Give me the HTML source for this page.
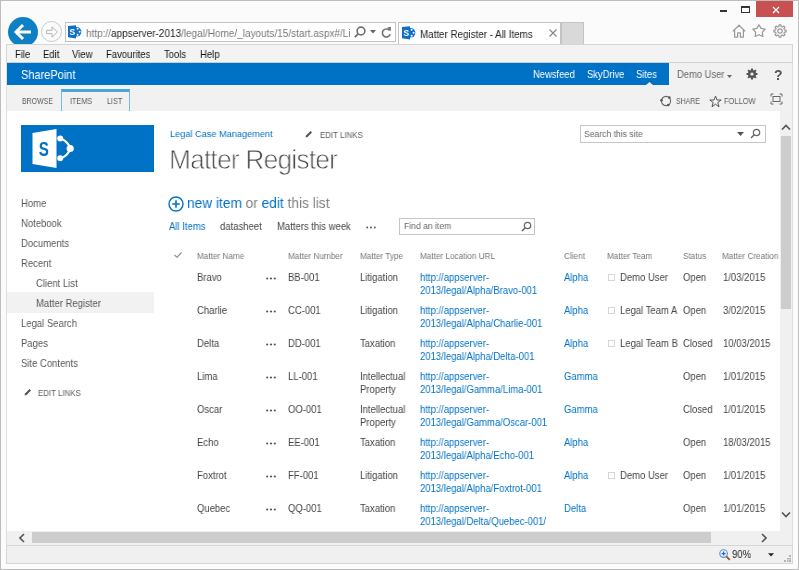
<!DOCTYPE html>
<html><head><meta charset="utf-8">
<style>
*{margin:0;padding:0;box-sizing:border-box}
html,body{width:799px;height:570px;overflow:hidden;background:#fbfbfb;font-family:"Liberation Sans",sans-serif;color:#444}
.a{position:absolute;white-space:nowrap;line-height:1;will-change:transform}
#frame{position:absolute;left:0;top:0;width:799px;height:570px;border:1px solid #bdbdbd;}
#menubar{position:absolute;left:6px;top:44px;width:787px;height:19px;background:#f3f3f3;border-top:1px solid #d6d6d6;border-left:1px solid #d6d6d6;border-right:1px solid #d6d6d6;border-bottom:1px solid #cfcfcf}
#suite{position:absolute;left:7px;top:63px;width:662px;height:22px;background:#0072c6}
#suiteR{position:absolute;left:669px;top:63px;width:123px;height:22px;background:#f1f1f1}
#ribbon{position:absolute;left:7px;top:85px;width:785px;height:26px;background:#f1f1f1}
#content{position:absolute;left:7px;top:111px;width:773px;height:420px;background:#fff}
#leftline{position:absolute;left:6px;top:63px;width:1px;height:483px;background:#dedede}
#rightline{position:absolute;left:792px;top:63px;width:1px;height:483px;background:#dedede}
#vscroll{position:absolute;left:780px;top:111px;width:12px;height:420px;background:#f0f0f0}
#vthumb{position:absolute;left:781px;top:136px;width:10px;height:173px;background:#cdcdcd}
#hscroll{position:absolute;left:7px;top:531px;width:785px;height:14px;background:#f0f0f0}
#hthumb{position:absolute;left:32px;top:532px;width:679px;height:11px;background:#cdcdcd}
#status{position:absolute;left:6px;top:545px;width:787px;height:19px;background:#f0f0f0;border:1px solid #d6d6d6}
.nav{font-size:10.26px;margin-top:0.6px;color:#585858}
.hdr{font-size:8.86px;margin-top:-0.32px;color:#777}
.cell{font-size:10.26px;color:#444;line-height:12.6px}
.link{color:#0072c6}
.dots{font-size:10px;color:#444;letter-spacing:0.5px;font-weight:bold}
.cb{position:absolute;width:7px;height:7px;border:1px solid #d6d6d6;background:#fff}
.t{transform:scaleX(0.9259);transform-origin:0 0}
</style></head><body>
<div id="frame"></div>

<!-- window controls -->
<div class="a" style="left:720px;top:10px;width:7px;height:2px;background:#333"></div>
<div class="a" style="left:741px;top:6px;width:9px;height:7px;border:1px solid #333;border-top-width:2px"></div>
<div class="a" style="left:756px;top:1px;width:37px;height:16px;background:#c75050"></div>
<svg class="a" style="left:771.5px;top:6px" width="8" height="8" viewBox="0 0 8 8"><path d="M1 1L7 7M7 1L1 7" stroke="#fff" stroke-width="1.3"/></svg>

<!-- back / forward -->
<div class="a" style="left:8px;top:17px;width:30px;height:30px;border-radius:50%;background:#0f80c6"></div>
<svg class="a" style="left:0px;top:0px" width="40" height="44" viewBox="0 0 40 44"><path d="M31 32H16.5M23 25L16 32L23 39" stroke="#fff" stroke-width="3" fill="none"/></svg>
<div class="a" style="left:41px;top:21px;width:21px;height:21px;border-radius:50%;border:1px solid #c8c8c8;background:#fbfbfb"></div>
<svg class="a" style="left:40px;top:20px" width="24" height="24" viewBox="0 0 24 24"><path d="M6.5 10.3H12V6.8L17.5 12L12 17.2V13.6H6.5Z" stroke="#b5b5b5" stroke-width="1" fill="none"/></svg>

<!-- address bar -->
<div class="a" style="left:65px;top:22px;width:331px;height:20px;background:#fff;border:1px solid #c3c3c3"></div>
<svg class="a" style="left:68px;top:25px" width="14" height="14" viewBox="0 0 14 14"><circle cx="8.6" cy="6.8" r="4.8" fill="#0f6fc6"/><path d="M0 1.1L8 0.2V13.4L0 12.3Z" fill="#0f6fc6"/><text x="1.6" y="10.2" font-size="8.5" font-weight="bold" fill="#fff" font-family="Liberation Sans">S</text><circle cx="9.6" cy="3.8" r="1" fill="#fff"/><circle cx="11.6" cy="6.8" r="1" fill="#fff"/><circle cx="9.6" cy="9.8" r="1" fill="#fff"/></svg>
<div class="a t" style="left:86px;top:27.61px;font-size:10.80px;color:#777">http://<span style="color:#222">appserver-2013</span>/legal/Home/_layouts/15/start.aspx#/Li</div>
<svg class="a" style="left:353px;top:25px" width="13" height="13" viewBox="0 0 13 13"><circle cx="8" cy="6" r="3.9" fill="none" stroke="#707070" stroke-width="1.6"/><path d="M5.2 8.8L1.8 12.2" stroke="#707070" stroke-width="1.9"/></svg>
<svg class="a" style="left:370px;top:30px" width="6" height="4" viewBox="0 0 6 4"><path d="M0 0H6L3 3.5Z" fill="#666"/></svg>
<svg class="a" style="left:381px;top:26px" width="11" height="13" viewBox="0 0 11 13"><path d="M8.6 4.6A4 4 0 1 0 9.2 8.2" fill="none" stroke="#707070" stroke-width="1.6"/><path d="M6.2 1.5L9.8 5.2L9.8 0.8Z" fill="#707070"/></svg>

<!-- tab -->
<div class="a" style="left:398px;top:22px;width:163px;height:23px;background:#fff;border:1px solid #c3c3c3;border-bottom:none"></div>
<svg class="a" style="left:402px;top:26px" width="14" height="14" viewBox="0 0 14 14"><circle cx="8.6" cy="6.8" r="4.8" fill="#0f6fc6"/><path d="M0 1.1L8 0.2V13.4L0 12.3Z" fill="#0f6fc6"/><text x="1.6" y="10.2" font-size="8.5" font-weight="bold" fill="#fff" font-family="Liberation Sans">S</text><circle cx="9.6" cy="3.8" r="1" fill="#fff"/><circle cx="11.6" cy="6.8" r="1" fill="#fff"/><circle cx="9.6" cy="9.8" r="1" fill="#fff"/></svg>
<div class="a t" style="left:420px;top:29.12px;font-size:10.58px;color:#222">Matter Register - All Items</div>
<svg class="a" style="left:549px;top:29px" width="8" height="8" viewBox="0 0 8 8"><path d="M0.5 0.5L7.5 7.5M7.5 0.5L0.5 7.5" stroke="#888" stroke-width="1.2"/></svg>
<div class="a" style="left:561px;top:22px;width:23px;height:23px;background:#d9d9d9;border:1px solid #c3c3c3;border-bottom:none"></div>

<!-- right icons -->
<svg class="a" style="left:732px;top:24px" width="15" height="15" viewBox="0 0 15 15"><path d="M0.8 7.4L7 1.2L13.2 7.4M2.6 5.8V13.2H5.6V8.9H8.4V13.2H11.4V5.8" fill="none" stroke="#9a9a9a" stroke-width="1.25" stroke-linejoin="round"/></svg>
<svg class="a" style="left:752px;top:24px" width="14" height="14" viewBox="0 0 14 14"><path d="M7.00 0.70 L9.06 4.36 L13.18 5.19 L10.33 8.28 L10.82 12.46 L7.00 10.70 L3.18 12.46 L3.67 8.28 L0.82 5.19 L4.94 4.36Z" fill="none" stroke="#9a9a9a" stroke-width="1.25" stroke-linejoin="round"/></svg>
<svg class="a" style="left:772.5px;top:24px" width="14" height="14" viewBox="0 0 14 14"><path d="M5.93 2.53 L6.03 0.88 L7.97 0.88 L8.07 2.53 L9.40 3.08 L10.64 1.98 L12.02 3.36 L10.92 4.60 L11.47 5.93 L13.12 6.03 L13.12 7.97 L11.47 8.07 L10.92 9.40 L12.02 10.64 L10.64 12.02 L9.40 10.92 L8.07 11.47 L7.97 13.12 L6.03 13.12 L5.93 11.47 L4.60 10.92 L3.36 12.02 L1.98 10.64 L3.08 9.40 L2.53 8.07 L0.88 7.97 L0.88 6.03 L2.53 5.93 L3.08 4.60 L1.98 3.36 L3.36 1.98 L4.60 3.08Z" fill="none" stroke="#9a9a9a" stroke-width="1.15" stroke-linejoin="round"/><circle cx="7" cy="7" r="2.2" fill="none" stroke="#9a9a9a" stroke-width="1.2"/></svg>

<!-- menubar -->
<div id="menubar"></div>
<div class="a t" style="left:15px;top:49.6px;font-size:10.26px;color:#111">File</div>
<div class="a t" style="left:43px;top:49.6px;font-size:10.26px;color:#111">Edit</div>
<div class="a t" style="left:72px;top:49.6px;font-size:10.26px;color:#111">View</div>
<div class="a t" style="left:106px;top:49.6px;font-size:10.26px;color:#111">Favourites</div>
<div class="a t" style="left:164px;top:49.6px;font-size:10.26px;color:#111">Tools</div>
<div class="a t" style="left:200px;top:49.6px;font-size:10.26px;color:#111">Help</div>

<div id="leftline"></div><div id="rightline"></div>
<!-- suite bar -->
<div id="suite"></div>
<div id="suiteR"></div>
<div class="a t" style="left:21px;top:69.6px;font-size:11.88px;color:#fff">SharePoint</div>
<div class="a t" style="left:533px;top:69.63px;font-size:10.15px;color:#fff">Newsfeed</div>
<div class="a t" style="left:587px;top:69.63px;font-size:10.15px;color:#fff">SkyDrive</div>
<div class="a t" style="left:636px;top:69.63px;font-size:10.15px;color:#fff">Sites</div>
<svg class="a" style="left:646px;top:82px" width="7" height="3" viewBox="0 0 7 3"><path d="M0 3L3.5 0L7 3Z" fill="#f1f1f1"/></svg>
<div class="a t" style="left:677px;top:70px;font-size:10.15px;color:#666">Demo User</div>
<svg class="a" style="left:727px;top:75px" width="5" height="3" viewBox="0 0 5 3"><path d="M0 0H5L2.5 3Z" fill="#666"/></svg>
<svg class="a" style="left:746px;top:68px" width="12" height="12" viewBox="0 0 12 12"><circle cx="6" cy="6" r="4" fill="#555"/><circle cx="6" cy="6" r="1.6" fill="#f1f1f1"/><path d="M6 0.5V11.5M0.5 6H11.5M2.1 2.1L9.9 9.9M9.9 2.1L2.1 9.9" stroke="#555" stroke-width="2"/><circle cx="6" cy="6" r="1.6" fill="#f1f1f1"/></svg>
<div class="a" style="left:773.5px;top:67.8px;font-size:14px;font-weight:bold;color:#555">?</div>

<!-- ribbon -->
<div id="ribbon"></div>
<div class="a" style="left:22px;top:96.5px;font-size:8.3px;color:#5c5c5c;transform:scaleX(0.84);transform-origin:0 0">BROWSE</div>
<div class="a" style="left:61px;top:89px;width:69px;height:22px;border:1px solid #72bde0;border-top:3px solid #46a8d8;border-bottom:none"></div>
<div class="a" style="left:69.5px;top:96.8px;font-size:8.3px;color:#5c5c5c;transform:scaleX(0.875);transform-origin:0 0">ITEMS</div>
<div class="a" style="left:107px;top:96.8px;font-size:8.3px;color:#5c5c5c;transform:scaleX(0.87);transform-origin:0 0">LIST</div>
<svg class="a" style="left:659px;top:94px" width="14" height="14" viewBox="0 0 14 14"><circle cx="7" cy="7" r="4.6" fill="none" stroke="#666" stroke-width="1.1"/><circle cx="10.3" cy="3.6" r="1.3" fill="#555"/><circle cx="2.5" cy="6.3" r="1.3" fill="#555"/><circle cx="9.3" cy="11" r="1.3" fill="#555"/></svg>
<div class="a" style="left:675.5px;top:96.8px;font-size:8.3px;color:#5c5c5c;transform:scaleX(0.84);transform-origin:0 0">SHARE</div>
<svg class="a" style="left:708.5px;top:94.5px" width="13" height="13" viewBox="0 0 13 13"><path d="M6.5 1L8 5H12.2L8.8 7.5L10 11.8L6.5 9.2L3 11.8L4.2 7.5L0.8 5H5Z" fill="none" stroke="#555" stroke-width="1"/></svg>
<div class="a" style="left:724px;top:96.8px;font-size:8.3px;color:#5c5c5c;transform:scaleX(0.9);transform-origin:0 0">FOLLOW</div>
<svg class="a" style="left:770px;top:93px" width="13" height="12" viewBox="0 0 13 12"><path d="M1 3.5V1H3.5M9.5 1H12V3.5M12 8.5V11H9.5M3.5 11H1V8.5" fill="none" stroke="#666" stroke-width="1"/><rect x="3" y="3.5" width="7" height="5" fill="none" stroke="#666" stroke-width="1"/></svg>

<!-- content -->
<div id="content"></div>
<div id="vscroll"></div>
<div id="vthumb"></div>
<svg class="a" style="left:781px;top:124px" width="10" height="6" viewBox="0 0 10 6"><path d="M1 5.5L5 1.5L9 5.5" fill="none" stroke="#555" stroke-width="1.6"/></svg>
<svg class="a" style="left:781px;top:512px" width="10" height="6" viewBox="0 0 10 6"><path d="M1 0.5L5 4.5L9 0.5" fill="none" stroke="#555" stroke-width="1.6"/></svg>
<div id="hscroll"></div>
<div id="hthumb"></div>
<svg class="a" style="left:19px;top:533px" width="6" height="10" viewBox="0 0 6 10"><path d="M5 1L1 5L5 9" fill="none" stroke="#555" stroke-width="1.6"/></svg>
<svg class="a" style="left:761px;top:533px" width="6" height="10" viewBox="0 0 6 10"><path d="M1 1L5 5L1 9" fill="none" stroke="#555" stroke-width="1.6"/></svg>
<div id="status"></div>
<svg class="a" style="left:719px;top:548.5px" width="12" height="12" viewBox="0 0 12 12"><circle cx="4.6" cy="4.6" r="3.8" fill="#eef4fb" stroke="#5a8fd0" stroke-width="1.1"/><path d="M2.6 4.6H6.6M4.6 2.6V6.6" stroke="#1d6fd0" stroke-width="1.4"/><path d="M7.3 7.3L10.8 10.8" stroke="#9a5a2a" stroke-width="1.9"/></svg>
<div class="a t" style="left:732px;top:549.63px;font-size:10.26px;color:#222">90%</div>
<svg class="a" style="left:768px;top:553px" width="6" height="4" viewBox="0 0 6 4"><path d="M0 0.2H6L3 3.6Z" fill="#222"/></svg>
<svg class="a" style="left:783px;top:554px" width="9" height="9" viewBox="0 0 9 9"><g fill="#b4b4b4"><rect x="6" y="1" width="2" height="2"/><rect x="4" y="4" width="2" height="1.5"/><rect x="6" y="4" width="2" height="1.5"/><rect x="1" y="6" width="2" height="2"/><rect x="4" y="6" width="1.5" height="2"/><rect x="6" y="6" width="2" height="2"/></g></svg>

<!-- logo -->
<div class="a" style="left:21px;top:125px;width:133px;height:47px;background:#0072c6"></div>
<svg class="a" style="left:31px;top:128px" width="44" height="42" viewBox="0 0 44 42"><path d="M1.5 5L25.5 1V40L1.5 36Z" fill="#fff"/><text x="7.8" y="27.6" font-size="20.5" font-weight="bold" fill="#0072c6" font-family="Liberation Sans" transform="translate(7.8 0) scale(0.74 1) translate(-7.8 0)">S</text><path d="M29.9 10.7C34.5 12.5 38 16 39.2 20.5C38 25 34.5 28.5 29.9 30.2" fill="none" stroke="#fff" stroke-width="2.2"/><circle cx="29.2" cy="10.6" r="3" fill="#fff"/><circle cx="39.2" cy="20.5" r="3.6" fill="#fff"/><circle cx="29.2" cy="30.3" r="3" fill="#fff"/></svg>

<!-- left nav -->
<div class="a nav t" style="left:21px;top:198px">Home</div>
<div class="a nav t" style="left:21px;top:218px">Notebook</div>
<div class="a nav t" style="left:21px;top:238px">Documents</div>
<div class="a nav t" style="left:21px;top:258px">Recent</div>
<div class="a nav t" style="left:36px;top:278px">Client List</div>
<div class="a" style="left:7px;top:292px;width:147px;height:21px;background:#f2f2f2"></div>
<div class="a nav t" style="left:36px;top:298px">Matter Register</div>
<div class="a nav t" style="left:21px;top:318px">Legal Search</div>
<div class="a nav t" style="left:21px;top:338px">Pages</div>
<div class="a nav t" style="left:21px;top:358px">Site Contents</div>
<svg class="a" style="left:24px;top:388px" width="8" height="8" viewBox="0 0 8 8"><path d="M0.5 7.5L1 5.5L5.5 1L7 2.5L2.5 7Z" fill="#555"/></svg>
<div class="a" style="left:37.5px;top:389.2px;font-size:8.3px;color:#5c5c5c;transform:scaleX(0.95);transform-origin:0 0">EDIT LINKS</div>

<!-- title area -->
<div class="a t" style="left:170px;top:128.64px;font-size:9.94px;color:#0072c6">Legal Case Management</div>
<svg class="a" style="left:305px;top:130px" width="8" height="8" viewBox="0 0 8 8"><path d="M0.5 7.5L1 5.5L5.5 1L7 2.5L2.5 7Z" fill="#555"/></svg>
<div class="a" style="left:319.5px;top:131px;font-size:8.3px;color:#5c5c5c;transform:scaleX(0.95);transform-origin:0 0">EDIT LINKS</div>
<div class="a" style="left:168.8px;top:144.8px;font-size:28.5px;color:#444;letter-spacing:-0.8px;-webkit-text-stroke:0.8px #fff;transform:scaleX(0.92);transform-origin:0 0">Matter Register</div>

<div class="a" style="left:580px;top:125px;width:186px;height:18px;border:1px solid #c6c6c6;background:#fff"></div>
<div class="a t" style="left:584px;top:130.16px;font-size:9.29px;color:#666">Search this site</div>
<svg class="a" style="left:737px;top:132px" width="7" height="4" viewBox="0 0 7 4"><path d="M0 0H7L3.5 4Z" fill="#555"/></svg>
<svg class="a" style="left:750px;top:128px" width="11" height="11" viewBox="0 0 11 11"><circle cx="6.5" cy="4.5" r="3.2" fill="none" stroke="#666" stroke-width="1.2"/><path d="M4.2 6.8L1 10" stroke="#666" stroke-width="1.5"/></svg>

<svg class="a" style="left:168px;top:196px" width="16" height="16" viewBox="0 0 16 16"><circle cx="8" cy="8" r="7" fill="none" stroke="#0072c6" stroke-width="1.4"/><path d="M4.2 8H11.8M8 4.2V11.8" stroke="#0072c6" stroke-width="1.6"/></svg>
<div class="a t" style="left:187px;top:196px;font-size:14.80px;color:#808080"><span class="link">new item</span> or <span class="link">edit</span> this list</div>

<div class="a t" style="left:169px;top:221.63px;font-size:10.26px;color:#0072c6">All Items</div>
<div class="a t" style="left:220px;top:221.63px;font-size:10.26px;color:#444">datasheet</div>
<div class="a t" style="left:277px;top:221.63px;font-size:10.26px;color:#444">Matters this week</div>
<svg class="a" style="left:366px;top:226px" width="10" height="3" viewBox="0 0 10 3"><circle cx="1.2" cy="1.5" r="0.95" fill="#555"/><circle cx="5" cy="1.5" r="0.95" fill="#555"/><circle cx="8.8" cy="1.5" r="0.95" fill="#555"/></svg>
<div class="a" style="left:399px;top:218px;width:136px;height:17px;border:1px solid #c6c6c6;background:#fff"></div>
<div class="a t" style="left:404px;top:221.66px;font-size:9.29px;color:#666">Find an item</div>
<svg class="a" style="left:521px;top:221px" width="11" height="11" viewBox="0 0 11 11"><circle cx="6.5" cy="4.5" r="3.2" fill="none" stroke="#666" stroke-width="1.2"/><path d="M4.2 6.8L1 10" stroke="#666" stroke-width="1.5"/></svg>

<!-- table header -->
<svg class="a" style="left:174px;top:252px" width="8" height="6" viewBox="0 0 8 6"><path d="M0.5 3L3 5.3L7.5 0.5" fill="none" stroke="#888" stroke-width="1.1"/></svg>
<div class="a hdr t" style="left:197px;top:252.3px">Matter Name</div>
<div class="a hdr t" style="left:288px;top:252.3px">Matter Number</div>
<div class="a hdr t" style="left:360px;top:252.3px">Matter Type</div>
<div class="a hdr t" style="left:420px;top:252.3px">Matter Location URL</div>
<div class="a hdr t" style="left:564px;top:252.3px">Client</div>
<div class="a hdr t" style="left:607px;top:252.3px">Matter Team</div>
<div class="a hdr t" style="left:683px;top:252.3px">Status</div>
<div class="a hdr t" style="left:722px;top:252.3px">Matter Creation</div>

<div id="rows"><div class="a cell t" style="left:197px;top:272.0px">Bravo</div>
<svg class="a" style="left:266px;top:276.5px" width="10" height="3" viewBox="0 0 10 3"><circle cx="1.2" cy="1.5" r="1.1" fill="#555"/><circle cx="5" cy="1.5" r="1.1" fill="#555"/><circle cx="8.8" cy="1.5" r="1.1" fill="#555"/></svg>
<div class="a cell t" style="left:288px;top:272.0px">BB-001</div>
<div class="a cell t" style="left:360px;top:272.0px">Litigation</div>
<div class="a cell link t" style="left:420px;top:272.0px">http://appserver-<br>2013/legal/Alpha/Bravo-001</div>
<div class="a cell link t" style="left:564px;top:272.0px">Alpha</div>
<div class="cb" style="left:608px;top:274.0px"></div>
<div class="a cell t" style="left:620px;top:272.0px">Demo User</div>
<div class="a cell t" style="left:683px;top:272.0px">Open</div>
<div class="a cell t" style="left:723px;top:272.0px">1/03/2015</div>
<div class="a cell t" style="left:197px;top:305.0px">Charlie</div>
<svg class="a" style="left:266px;top:309.5px" width="10" height="3" viewBox="0 0 10 3"><circle cx="1.2" cy="1.5" r="1.1" fill="#555"/><circle cx="5" cy="1.5" r="1.1" fill="#555"/><circle cx="8.8" cy="1.5" r="1.1" fill="#555"/></svg>
<div class="a cell t" style="left:288px;top:305.0px">CC-001</div>
<div class="a cell t" style="left:360px;top:305.0px">Litigation</div>
<div class="a cell link t" style="left:420px;top:305.0px">http://appserver-<br>2013/legal/Alpha/Charlie-001</div>
<div class="a cell link t" style="left:564px;top:305.0px">Alpha</div>
<div class="cb" style="left:608px;top:307.0px"></div>
<div class="a cell t" style="left:620px;top:305.0px">Legal Team A</div>
<div class="a cell t" style="left:683px;top:305.0px">Open</div>
<div class="a cell t" style="left:723px;top:305.0px">3/02/2015</div>
<div class="a cell t" style="left:197px;top:338.0px">Delta</div>
<svg class="a" style="left:266px;top:342.5px" width="10" height="3" viewBox="0 0 10 3"><circle cx="1.2" cy="1.5" r="1.1" fill="#555"/><circle cx="5" cy="1.5" r="1.1" fill="#555"/><circle cx="8.8" cy="1.5" r="1.1" fill="#555"/></svg>
<div class="a cell t" style="left:288px;top:338.0px">DD-001</div>
<div class="a cell t" style="left:360px;top:338.0px">Taxation</div>
<div class="a cell link t" style="left:420px;top:338.0px">http://appserver-<br>2013/legal/Alpha/Delta-001</div>
<div class="a cell link t" style="left:564px;top:338.0px">Alpha</div>
<div class="cb" style="left:608px;top:340.0px"></div>
<div class="a cell t" style="left:620px;top:338.0px">Legal Team B</div>
<div class="a cell t" style="left:683px;top:338.0px">Closed</div>
<div class="a cell t" style="left:723px;top:338.0px">10/03/2015</div>
<div class="a cell t" style="left:197px;top:371.0px">Lima</div>
<svg class="a" style="left:266px;top:375.5px" width="10" height="3" viewBox="0 0 10 3"><circle cx="1.2" cy="1.5" r="1.1" fill="#555"/><circle cx="5" cy="1.5" r="1.1" fill="#555"/><circle cx="8.8" cy="1.5" r="1.1" fill="#555"/></svg>
<div class="a cell t" style="left:288px;top:371.0px">LL-001</div>
<div class="a cell t" style="left:360px;top:371.0px">Intellectual<br>Property</div>
<div class="a cell link t" style="left:420px;top:371.0px">http://appserver-<br>2013/legal/Gamma/Lima-001</div>
<div class="a cell link t" style="left:564px;top:371.0px">Gamma</div>
<div class="a cell t" style="left:683px;top:371.0px">Open</div>
<div class="a cell t" style="left:723px;top:371.0px">1/01/2015</div>
<div class="a cell t" style="left:197px;top:404.0px">Oscar</div>
<svg class="a" style="left:266px;top:408.5px" width="10" height="3" viewBox="0 0 10 3"><circle cx="1.2" cy="1.5" r="1.1" fill="#555"/><circle cx="5" cy="1.5" r="1.1" fill="#555"/><circle cx="8.8" cy="1.5" r="1.1" fill="#555"/></svg>
<div class="a cell t" style="left:288px;top:404.0px">OO-001</div>
<div class="a cell t" style="left:360px;top:404.0px">Intellectual<br>Property</div>
<div class="a cell link t" style="left:420px;top:404.0px">http://appserver-<br>2013/legal/Gamma/Oscar-001</div>
<div class="a cell link t" style="left:564px;top:404.0px">Gamma</div>
<div class="a cell t" style="left:683px;top:404.0px">Closed</div>
<div class="a cell t" style="left:723px;top:404.0px">1/01/2015</div>
<div class="a cell t" style="left:197px;top:437.0px">Echo</div>
<svg class="a" style="left:266px;top:441.5px" width="10" height="3" viewBox="0 0 10 3"><circle cx="1.2" cy="1.5" r="1.1" fill="#555"/><circle cx="5" cy="1.5" r="1.1" fill="#555"/><circle cx="8.8" cy="1.5" r="1.1" fill="#555"/></svg>
<div class="a cell t" style="left:288px;top:437.0px">EE-001</div>
<div class="a cell t" style="left:360px;top:437.0px">Taxation</div>
<div class="a cell link t" style="left:420px;top:437.0px">http://appserver-<br>2013/legal/Alpha/Echo-001</div>
<div class="a cell link t" style="left:564px;top:437.0px">Alpha</div>
<div class="a cell t" style="left:683px;top:437.0px">Open</div>
<div class="a cell t" style="left:723px;top:437.0px">18/03/2015</div>
<div class="a cell t" style="left:197px;top:470.0px">Foxtrot</div>
<svg class="a" style="left:266px;top:474.5px" width="10" height="3" viewBox="0 0 10 3"><circle cx="1.2" cy="1.5" r="1.1" fill="#555"/><circle cx="5" cy="1.5" r="1.1" fill="#555"/><circle cx="8.8" cy="1.5" r="1.1" fill="#555"/></svg>
<div class="a cell t" style="left:288px;top:470.0px">FF-001</div>
<div class="a cell t" style="left:360px;top:470.0px">Litigation</div>
<div class="a cell link t" style="left:420px;top:470.0px">http://appserver-<br>2013/legal/Alpha/Foxtrot-001</div>
<div class="a cell link t" style="left:564px;top:470.0px">Alpha</div>
<div class="cb" style="left:608px;top:472.0px"></div>
<div class="a cell t" style="left:620px;top:470.0px">Demo User</div>
<div class="a cell t" style="left:683px;top:470.0px">Open</div>
<div class="a cell t" style="left:723px;top:470.0px">1/01/2015</div>
<div class="a cell t" style="left:197px;top:503.0px">Quebec</div>
<svg class="a" style="left:266px;top:507.5px" width="10" height="3" viewBox="0 0 10 3"><circle cx="1.2" cy="1.5" r="1.1" fill="#555"/><circle cx="5" cy="1.5" r="1.1" fill="#555"/><circle cx="8.8" cy="1.5" r="1.1" fill="#555"/></svg>
<div class="a cell t" style="left:288px;top:503.0px">QQ-001</div>
<div class="a cell t" style="left:360px;top:503.0px">Taxation</div>
<div class="a cell link t" style="left:420px;top:503.0px">http://appserver-<br>2013/legal/Delta/Quebec-001/</div>
<div class="a cell link t" style="left:564px;top:503.0px">Delta</div>
<div class="a cell t" style="left:683px;top:503.0px">Open</div>
<div class="a cell t" style="left:723px;top:503.0px">1/01/2015</div></div><!--rowsend-->
</body></html>
